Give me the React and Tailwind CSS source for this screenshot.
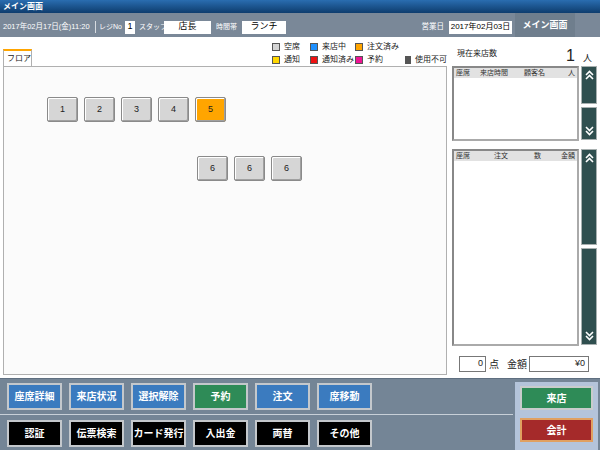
import React from "react";

const font = { fontFamily: '"Liberation Sans", "Noto Sans CJK JP", sans-serif' };

const legend = [
  [["bg-[#d4d4d4]", "空席"], ["bg-[#1e90ff]", "来店中"], ["bg-[#ffa500]", "注文済み"], null],
  [["bg-[#ffd700]", "通知"], ["bg-[#ee1111]", "通知済み"], ["bg-[#ee1493]", "予約"], ["bg-[#555555]", "使用不可"]],
];
const legendWidths = ["w-[38px]", "w-[45px]", "w-[50px]", "w-[42px]"];

const topButtons = [
  ["座席詳細", "bg-[#3b7bbf]"],
  ["来店状況", "bg-[#3b7bbf]"],
  ["選択解除", "bg-[#3b7bbf]"],
  ["予約", "bg-[#2e8b57]"],
  ["注文", "bg-[#3b7bbf]"],
  ["席移動", "bg-[#3b7bbf]"],
];
const bottomButtons = ["認証", "伝票検索", "カード発行", "入出金", "両替", "その他"];

function Seat({ label, active }) {
  return (
    <div
      className={`w-[31px] h-[25px] flex items-center justify-center text-[9px] border border-[#8a8a8a] rounded-[2px] shadow-[inset_-1px_-1px_0_#a0a0a0,inset_1px_1px_0_#ffffff] ${
        active ? "bg-[#ffa500]" : "bg-[#d6d6d6]"
      }`}
    >
      {label}
    </div>
  );
}

function Chevron({ up }) {
  return (
    <svg width="9" height="10" viewBox="0 0 9 10" className="text-white">
      <path
        d={up ? "M1 5 L4.5 1.5 L8 5 M1 9 L4.5 5.5 L8 9" : "M1 1 L4.5 4.5 L8 1 M1 5 L4.5 8.5 L8 5"}
        fill="none"
        stroke="currentColor"
        strokeWidth="1.6"
      />
    </svg>
  );
}

function ScrollBtn({ up, className }) {
  return (
    <div
      className={`w-[16px] bg-[#2f4f4f] border border-[#a8b0b0] flex justify-center ${
        up ? "items-start pt-[3px]" : "items-end pb-[3px]"
      } ${className}`}
    >
      <Chevron up={up} />
    </div>
  );
}

function PosButton({ label, color }) {
  return (
    <div
      className={`w-[55px] h-[27px] flex items-center justify-center text-white text-[10px] font-bold border-2 border-[#c4c8cc] ${color}`}
    >
      {label}
    </div>
  );
}

export default function App() {
  return (
    <div className="w-[600px] h-[450px] bg-white flex flex-col overflow-hidden text-[#222]" style={font}>
      {/* Title bar */}
      <div className="h-[13px] bg-gradient-to-b from-[#2a6db0] to-[#0e3d6e] text-white text-[8px] font-bold leading-[13px] px-[3px]">
        メイン画面
      </div>

      {/* Status bar */}
      <div className="h-[24px] bg-[#7a8898] flex text-[8px] text-white whitespace-nowrap">
        <div className="flex items-center h-[24px] pl-[3px] pt-[4px] flex-1">
          <span className="w-[90px] text-[7.5px]">2017年02月17日(金)11:20</span>
          <span className="w-px h-[12px] bg-white/70 ml-[2px]" />
          <span className="w-[24px] ml-[3px] text-[7px]">レジNo</span>
          <span className="bg-white text-black w-[10px] h-[13px] flex items-center justify-center text-[9px] ml-[2px]">1</span>
          <span className="w-[25px] ml-[4px] text-[7px]">スタッフ</span>
          <span className="bg-white text-black w-[47px] h-[13px] flex items-center justify-center text-[9px]">店長</span>
          <span className="w-[26px] ml-[5px] text-[7px]">時間帯</span>
          <span className="bg-white text-black w-[44px] h-[13px] flex items-center justify-center text-[9px]">ランチ</span>
        </div>
        <div className="flex items-center h-[24px] pt-[4px] gap-[5px] pr-[3px]">
          <span className="text-[7.5px]">営業日</span>
          <span className="bg-white text-black w-[63px] h-[13px] flex items-center justify-center text-[8px]">2017年02月03日</span>
        </div>
        <div className="w-[60px] h-[24px] bg-[#6f7e8d] flex items-center justify-center text-[9px] font-bold pt-[2px] mr-[25px]">
          メイン画面
        </div>
      </div>

      {/* Main content */}
      <div className="flex-1 flex bg-white">
        {/* Floor */}
        <div className="w-[448px] pl-[3px] pt-[3px] pb-[3px] flex flex-col">
          <div className="h-[26px] flex items-end">
            <div className="h-[18px] w-[29px] border border-[#b0b0b0] border-b-0 border-t-2 border-t-[#ffa500] bg-white text-[8px] flex items-center pl-[3px] relative top-px">
              フロア
            </div>
            <div className="flex-1 flex flex-col gap-[2px] pl-[240px] pb-[1px] text-[8px] leading-[11px] whitespace-nowrap">
              {legend.map((row, i) => (
                <div key={i} className="flex">
                  {row.map((item, j) => (
                    <div key={j} className={`${legendWidths[j]} flex items-center gap-[4px]`}>
                      {item && (
                        <>
                          <span className={`w-[8px] h-[8px] border border-[#555] ${item[0]}`} />
                          <span>{item[1]}</span>
                        </>
                      )}
                    </div>
                  ))}
                </div>
              ))}
            </div>
          </div>
          <div className="flex-1 border border-[#b0b0b0] bg-[#fbfbfb] relative">
            <div className="absolute left-[43px] top-[30px] flex gap-[6px]">
              {[1, 2, 3, 4].map((n) => (
                <Seat key={n} label={n} />
              ))}
              <Seat label={5} active />
            </div>
            <div className="absolute left-[193px] top-[89px] flex gap-[6px]">
              <Seat label={6} />
              <Seat label={6} />
              <Seat label={6} />
            </div>
          </div>
        </div>

        {/* Right panel */}
        <div className="flex-1 pl-[5px] pr-[3px] flex flex-col pb-[6px]">
          <div className="h-[29px] flex items-end pb-[1px] text-[8px] relative">
            <span className="pl-[5px] pb-[5px]">現在来店数</span>
            <span className="absolute left-[114px] top-[11px] text-[16px] leading-none">1</span>
            <span className="absolute left-[131px] top-[17px] text-[9px] leading-none">人</span>
          </div>
          <div className="flex h-[75px] gap-[2px]">
            <div className="w-[127px] border-2 border-[#888] border-r-[#aaa] border-b-[#aaa] bg-white">
              <div className="h-[10px] bg-[#e2e2e2] flex text-[7px] leading-[10px] px-[2px] text-[#333]">
                <span className="w-[24px]">座席</span>
                <span className="w-[44px]">来店時間</span>
                <span className="w-[40px]">顧客名</span>
                <span className="flex-1 text-right">人</span>
              </div>
            </div>
            <div className="flex flex-col gap-[3px]">
              <ScrollBtn up className="h-[38px]" />
              <ScrollBtn className="h-[33px]" />
            </div>
          </div>
          <div className="flex h-[197px] gap-[2px] mt-[8px]">
            <div className="w-[127px] border-2 border-[#888] border-r-[#aaa] border-b-[#aaa] bg-white">
              <div className="h-[10px] bg-[#e2e2e2] flex text-[7px] leading-[10px] px-[2px] text-[#333]">
                <span className="w-[38px]">座席</span>
                <span className="w-[40px]">注文</span>
                <span className="w-[22px]">数</span>
                <span className="flex-1 text-right">金額</span>
              </div>
            </div>
            <div className="flex flex-col gap-[3px]">
              <ScrollBtn up className="h-[96px]" />
              <ScrollBtn className="h-[97px]" />
            </div>
          </div>
          <div className="flex items-center mt-[10px] pl-[7px] text-[10px]">
            <span className="w-[27px] h-[16px] border border-[#777] text-[9px] flex items-center justify-end pr-[2px]">0</span>
            <span className="ml-[3px]">点</span>
            <span className="ml-[8px]">金額</span>
            <span className="ml-[2px] w-[60px] h-[16px] border border-[#777] text-[9px] flex items-center justify-end pr-[3px]">¥0</span>
          </div>
        </div>
      </div>

      {/* Bottom bar */}
      <div className="h-[72px] bg-[#748596] border-t border-[#5f6f80] flex">
        <div className="w-[513px] flex flex-col pt-[4px]">
          <div className="flex gap-[7px] pl-[7px]">
            {topButtons.map(([label, color]) => (
              <PosButton key={label} label={label} color={color} />
            ))}
          </div>
          <div className="h-px bg-[#c8d0d8] mt-[4px] mb-[5px]" />
          <div className="flex gap-[7px] pl-[7px]">
            {bottomButtons.map((label) => (
              <PosButton key={label} label={label} color="bg-black" />
            ))}
          </div>
        </div>
        <div className="w-[83px] ml-[2px] mt-[3px] bg-[#b4c4da] flex flex-col items-center gap-[8px] pt-[4px]">
          <div className="w-[73px] h-[24px] bg-[#2e8b57] border-2 border-[#c8cccc] text-white text-[10px] font-bold flex items-center justify-center">
            来店
          </div>
          <div className="w-[73px] h-[24px] bg-[#a52a2a] border-2 border-[#e0a060] text-white text-[10px] font-bold flex items-center justify-center">
            会計
          </div>
        </div>
      </div>
    </div>
  );
}
